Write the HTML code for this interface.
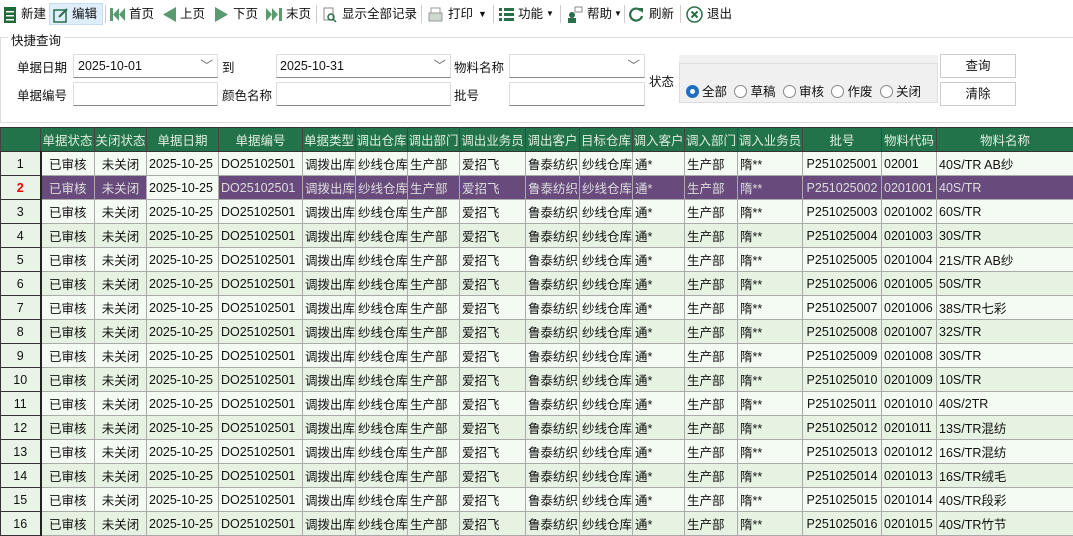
<!DOCTYPE html><html><head><meta charset="utf-8"><style>
*{box-sizing:border-box;margin:0;padding:0}
body{width:1073px;height:534px;overflow:hidden;background:#fff;font-family:"Liberation Sans","Noto Sans CJK SC",sans-serif;font-size:12.5px;color:#111;position:relative}
.tb{position:absolute;left:0;top:0;width:1073px;height:28px;background:#fff}
.it{position:absolute;top:4px;height:20px;line-height:20px;white-space:nowrap}
.sep{position:absolute;top:5px;width:1px;height:18px;background:#ccc}
.ab{position:absolute}
.lbl{position:absolute;font-size:12.5px}
.inp{position:absolute;height:24px;border:1px solid #ddd;border-bottom:1px solid #888;background:#fff;padding-left:4px;line-height:22px}
.btn{position:absolute;width:76px;height:24px;border:1px solid #ccc;background:#fff;text-align:center;line-height:22px}
table{position:absolute;left:0;top:127px;border-collapse:collapse;table-layout:fixed;width:1073px}
td,th{height:24px;border:1px solid #aaa;white-space:nowrap;overflow:hidden;padding:0 2px;font-weight:normal;font-size:12.5px}
th{background:#22734a;color:#dfeee0;text-align:center;border-color:#333 #444;padding:0}
td{text-align:left;background:#f4fbf2}
td.c{text-align:center}
td.rn{text-align:center;background:#e8f4e5;border:1px solid #333;border-right:2px solid #222}
tr.e td{background:#e6f3e2}
tr.e td.rn{background:#e8f4e5}
tr.s td{background:#684b7c;color:#ddd}
tr.s td.rn{background:#e8f4e5;color:#e00;font-weight:bold}
tr.s td.d{background:#f4fbf2;color:#111;border:1px dotted #444}
.rad{display:inline-block;width:13px;height:13px;border:1px solid #888;border-radius:50%;vertical-align:-2px;margin-right:3px;background:#fff}
.rad.on{border:4px solid #1e6fc4}
</style></head><body>
<div class="tb">
<svg class="ab" style="left:4px;top:7px" width="12" height="16"><rect width="12" height="16" fill="#1f6b3a"/><rect x="2" y="4" width="8" height="1.5" fill="#fff"/><rect x="2" y="8" width="8" height="1.5" fill="#fff"/><rect x="2" y="12" width="8" height="1.5" fill="#fff"/></svg>
<div class="it" style="left:21px">新建</div>
<div class="ab" style="left:49px;top:3px;width:54px;height:22px;background:#dfeefb;border:1px solid #c5dcf0"></div>
<svg class="ab" style="left:53px;top:7px" width="16" height="16"><rect x="1" y="3" width="12" height="12" fill="none" stroke="#2a6e4a" stroke-width="1.5"/><path d="M6 10 L14 2" stroke="#2a6e4a" stroke-width="2"/></svg>
<div class="it" style="left:72px">编辑</div>
<div class="sep" style="left:105px"></div>
<svg class="ab" style="left:110px;top:8px" width="16" height="13"><rect x="0" y="0" width="3" height="13" fill="#5a9a70"/><path d="M9 0 L3 6.5 L9 13Z M15 0 L9 6.5 L15 13Z" fill="#5a9a70"/></svg>
<div class="it" style="left:129px">首页</div>
<svg class="ab" style="left:163px;top:7px" width="13" height="15"><path d="M13 0 L0 7.5 L13 15Z" fill="#5a9a70"/></svg>
<div class="it" style="left:180px">上页</div>
<svg class="ab" style="left:215px;top:7px" width="13" height="15"><path d="M0 0 L13 7.5 L0 15Z" fill="#5a9a70"/></svg>
<div class="it" style="left:233px">下页</div>
<svg class="ab" style="left:266px;top:8px" width="16" height="13"><path d="M0 0 L6 6.5 L0 13Z M6 0 L12 6.5 L6 13Z" fill="#5a9a70"/><rect x="13" width="3" height="13" fill="#5a9a70"/></svg>
<div class="it" style="left:286px">末页</div>
<div class="sep" style="left:316px"></div>
<svg class="ab" style="left:323px;top:7px" width="14" height="16"><rect x="1" y="1" width="9" height="12" fill="none" stroke="#888"/><circle cx="8" cy="10" r="3" fill="none" stroke="#2a6e4a" stroke-width="1.5"/><path d="M10 12 L13 15" stroke="#2a6e4a" stroke-width="1.5"/></svg>
<div class="it" style="left:342px">显示全部记录</div>
<div class="sep" style="left:421px"></div>
<svg class="ab" style="left:428px;top:7px" width="15" height="15"><rect x="3" y="1" width="9" height="5" fill="none" stroke="#999"/><rect x="1" y="6" width="13" height="8" fill="#cfd8cf" stroke="#999"/></svg>
<div class="it" style="left:448px">打印</div>
<div class="it" style="left:478px;font-size:9px">▼</div>
<div class="sep" style="left:493px"></div>
<svg class="ab" style="left:499px;top:8px" width="15" height="13"><g fill="#2a6e4a"><rect width="3" height="3"/><rect y="5" width="3" height="3"/><rect y="10" width="3" height="3"/><rect x="5" width="10" height="3"/><rect x="5" y="5" width="10" height="3"/><rect x="5" y="10" width="10" height="3"/></g></svg>
<div class="it" style="left:518px">功能</div><div class="it" style="left:546px;font-size:8px">▼</div>
<div class="sep" style="left:560px"></div>
<svg class="ab" style="left:567px;top:6px" width="16" height="17"><circle cx="5" cy="9" r="3" fill="#2a6e4a"/><rect x="1" y="12" width="8" height="5" fill="#2a6e4a"/><rect x="8" y="1" width="7" height="5" fill="none" stroke="#888"/></svg>
<div class="it" style="left:587px">帮助</div><div class="it" style="left:614px;font-size:8px">▼</div>
<div class="sep" style="left:624px"></div>
<svg class="ab" style="left:629px;top:7px" width="15" height="15"><path d="M12 4 A6 6 0 1 0 13 9" fill="none" stroke="#2a6e4a" stroke-width="2.2"/><path d="M9 1 L14 1 L14 6Z" fill="#2a6e4a"/></svg>
<div class="it" style="left:649px">刷新</div>
<div class="sep" style="left:680px"></div>
<svg class="ab" style="left:686px;top:6px" width="17" height="17"><circle cx="8.5" cy="8.5" r="7.5" fill="none" stroke="#2a6e4a" stroke-width="1.5"/><path d="M5.5 5.5 L11.5 11.5 M11.5 5.5 L5.5 11.5" stroke="#2a6e4a" stroke-width="2"/></svg>
<div class="it" style="left:707px">退出</div>
</div>
<div class="ab" style="left:0;top:37px;width:1073px;height:86px;border-top:1px solid #ddd;border-left:1px solid #ddd;border-bottom:1px solid #ddd"></div>
<div class="lbl" style="left:8px;top:30px;background:#fff;padding:0 3px">快捷查询</div>
<div class="lbl" style="left:17px;top:57px">单据日期</div>
<div class="inp" style="left:73px;top:54px;width:145px">2025-10-01<span style="position:absolute;right:4px;color:#666">﹀</span></div>
<div class="lbl" style="left:222px;top:57px">到</div>
<div class="inp" style="left:276px;top:54px;width:175px;padding-left:3px">2025-10-31<span style="position:absolute;right:4px;color:#666">﹀</span></div>
<div class="lbl" style="left:454px;top:57px">物料名称</div>
<div class="inp" style="left:509px;top:54px;width:136px"><span style="position:absolute;right:4px;color:#666">﹀</span></div>
<div class="lbl" style="left:17px;top:85px">单据编号</div>
<div class="inp" style="left:73px;top:82px;width:145px"></div>
<div class="lbl" style="left:222px;top:85px">颜色名称</div>
<div class="inp" style="left:276px;top:82px;width:175px"></div>
<div class="lbl" style="left:454px;top:85px">批号</div>
<div class="inp" style="left:509px;top:82px;width:136px"></div>
<div class="lbl" style="left:649px;top:71px">状态</div>
<div class="ab" style="left:679px;top:55px;width:259px;height:48px;background:#f0f0f0;border-bottom:1px solid #ddd"></div>
<div class="ab" style="left:679px;top:63px;width:259px;height:40px;border:1px solid #ddd"></div>
<div class="lbl" style="left:686px;top:81px"><span class="rad on"></span>全部 <span class="rad" style="margin-left:4px"></span>草稿 <span class="rad" style="margin-left:4px"></span>审核 <span class="rad" style="margin-left:4px"></span>作废 <span class="rad" style="margin-left:4px"></span>关闭</div>
<div class="btn" style="left:940px;top:54px">查询</div>
<div class="btn" style="left:940px;top:82px">清除</div>
<table>
<colgroup><col style="width:40px"><col style="width:54px"><col style="width:52px"><col style="width:72px"><col style="width:84px"><col style="width:53px"><col style="width:52px"><col style="width:52px"><col style="width:66px"><col style="width:54px"><col style="width:53px"><col style="width:52px"><col style="width:53px"><col style="width:65px"><col style="width:79px"><col style="width:55px"><col style="width:137px"></colgroup>
<tr><th></th><th>单据状态</th><th>关闭状态</th><th>单据日期</th><th>单据编号</th><th>单据类型</th><th>调出仓库</th><th>调出部门</th><th>调出业务员</th><th>调出客户</th><th>目标仓库</th><th>调入客户</th><th>调入部门</th><th>调入业务员</th><th>批号</th><th>物料代码</th><th>物料名称</th></tr>
<tr><td class="rn">1</td><td class="c">已审核</td><td class="c">未关闭</td><td class="d">2025-10-25</td><td>DO25102501</td><td>调拨出库</td><td>纱线仓库</td><td>生产部</td><td>爱招飞</td><td>鲁泰纺织</td><td>纱线仓库</td><td>通*</td><td>生产部</td><td>隋**</td><td class="c">P251025001</td><td>02001</td><td>40S/TR AB纱</td></tr>
<tr class="s"><td class="rn">2</td><td class="c">已审核</td><td class="c">未关闭</td><td class="d">2025-10-25</td><td>DO25102501</td><td>调拨出库</td><td>纱线仓库</td><td>生产部</td><td>爱招飞</td><td>鲁泰纺织</td><td>纱线仓库</td><td>通*</td><td>生产部</td><td>隋**</td><td class="c">P251025002</td><td>0201001</td><td>40S/TR</td></tr>
<tr><td class="rn">3</td><td class="c">已审核</td><td class="c">未关闭</td><td>2025-10-25</td><td>DO25102501</td><td>调拨出库</td><td>纱线仓库</td><td>生产部</td><td>爱招飞</td><td>鲁泰纺织</td><td>纱线仓库</td><td>通*</td><td>生产部</td><td>隋**</td><td class="c">P251025003</td><td>0201002</td><td>60S/TR</td></tr>
<tr class="e"><td class="rn">4</td><td class="c">已审核</td><td class="c">未关闭</td><td>2025-10-25</td><td>DO25102501</td><td>调拨出库</td><td>纱线仓库</td><td>生产部</td><td>爱招飞</td><td>鲁泰纺织</td><td>纱线仓库</td><td>通*</td><td>生产部</td><td>隋**</td><td class="c">P251025004</td><td>0201003</td><td>30S/TR</td></tr>
<tr><td class="rn">5</td><td class="c">已审核</td><td class="c">未关闭</td><td>2025-10-25</td><td>DO25102501</td><td>调拨出库</td><td>纱线仓库</td><td>生产部</td><td>爱招飞</td><td>鲁泰纺织</td><td>纱线仓库</td><td>通*</td><td>生产部</td><td>隋**</td><td class="c">P251025005</td><td>0201004</td><td>21S/TR AB纱</td></tr>
<tr class="e"><td class="rn">6</td><td class="c">已审核</td><td class="c">未关闭</td><td>2025-10-25</td><td>DO25102501</td><td>调拨出库</td><td>纱线仓库</td><td>生产部</td><td>爱招飞</td><td>鲁泰纺织</td><td>纱线仓库</td><td>通*</td><td>生产部</td><td>隋**</td><td class="c">P251025006</td><td>0201005</td><td>50S/TR</td></tr>
<tr><td class="rn">7</td><td class="c">已审核</td><td class="c">未关闭</td><td>2025-10-25</td><td>DO25102501</td><td>调拨出库</td><td>纱线仓库</td><td>生产部</td><td>爱招飞</td><td>鲁泰纺织</td><td>纱线仓库</td><td>通*</td><td>生产部</td><td>隋**</td><td class="c">P251025007</td><td>0201006</td><td>38S/TR七彩</td></tr>
<tr class="e"><td class="rn">8</td><td class="c">已审核</td><td class="c">未关闭</td><td>2025-10-25</td><td>DO25102501</td><td>调拨出库</td><td>纱线仓库</td><td>生产部</td><td>爱招飞</td><td>鲁泰纺织</td><td>纱线仓库</td><td>通*</td><td>生产部</td><td>隋**</td><td class="c">P251025008</td><td>0201007</td><td>32S/TR</td></tr>
<tr><td class="rn">9</td><td class="c">已审核</td><td class="c">未关闭</td><td>2025-10-25</td><td>DO25102501</td><td>调拨出库</td><td>纱线仓库</td><td>生产部</td><td>爱招飞</td><td>鲁泰纺织</td><td>纱线仓库</td><td>通*</td><td>生产部</td><td>隋**</td><td class="c">P251025009</td><td>0201008</td><td>30S/TR</td></tr>
<tr class="e"><td class="rn">10</td><td class="c">已审核</td><td class="c">未关闭</td><td>2025-10-25</td><td>DO25102501</td><td>调拨出库</td><td>纱线仓库</td><td>生产部</td><td>爱招飞</td><td>鲁泰纺织</td><td>纱线仓库</td><td>通*</td><td>生产部</td><td>隋**</td><td class="c">P251025010</td><td>0201009</td><td>10S/TR</td></tr>
<tr><td class="rn">11</td><td class="c">已审核</td><td class="c">未关闭</td><td>2025-10-25</td><td>DO25102501</td><td>调拨出库</td><td>纱线仓库</td><td>生产部</td><td>爱招飞</td><td>鲁泰纺织</td><td>纱线仓库</td><td>通*</td><td>生产部</td><td>隋**</td><td class="c">P251025011</td><td>0201010</td><td>40S/2TR</td></tr>
<tr class="e"><td class="rn">12</td><td class="c">已审核</td><td class="c">未关闭</td><td>2025-10-25</td><td>DO25102501</td><td>调拨出库</td><td>纱线仓库</td><td>生产部</td><td>爱招飞</td><td>鲁泰纺织</td><td>纱线仓库</td><td>通*</td><td>生产部</td><td>隋**</td><td class="c">P251025012</td><td>0201011</td><td>13S/TR混纺</td></tr>
<tr><td class="rn">13</td><td class="c">已审核</td><td class="c">未关闭</td><td>2025-10-25</td><td>DO25102501</td><td>调拨出库</td><td>纱线仓库</td><td>生产部</td><td>爱招飞</td><td>鲁泰纺织</td><td>纱线仓库</td><td>通*</td><td>生产部</td><td>隋**</td><td class="c">P251025013</td><td>0201012</td><td>16S/TR混纺</td></tr>
<tr class="e"><td class="rn">14</td><td class="c">已审核</td><td class="c">未关闭</td><td>2025-10-25</td><td>DO25102501</td><td>调拨出库</td><td>纱线仓库</td><td>生产部</td><td>爱招飞</td><td>鲁泰纺织</td><td>纱线仓库</td><td>通*</td><td>生产部</td><td>隋**</td><td class="c">P251025014</td><td>0201013</td><td>16S/TR绒毛</td></tr>
<tr><td class="rn">15</td><td class="c">已审核</td><td class="c">未关闭</td><td>2025-10-25</td><td>DO25102501</td><td>调拨出库</td><td>纱线仓库</td><td>生产部</td><td>爱招飞</td><td>鲁泰纺织</td><td>纱线仓库</td><td>通*</td><td>生产部</td><td>隋**</td><td class="c">P251025015</td><td>0201014</td><td>40S/TR段彩</td></tr>
<tr class="e"><td class="rn">16</td><td class="c">已审核</td><td class="c">未关闭</td><td>2025-10-25</td><td>DO25102501</td><td>调拨出库</td><td>纱线仓库</td><td>生产部</td><td>爱招飞</td><td>鲁泰纺织</td><td>纱线仓库</td><td>通*</td><td>生产部</td><td>隋**</td><td class="c">P251025016</td><td>0201015</td><td>40S/TR竹节</td></tr>
</table>
</body></html>
